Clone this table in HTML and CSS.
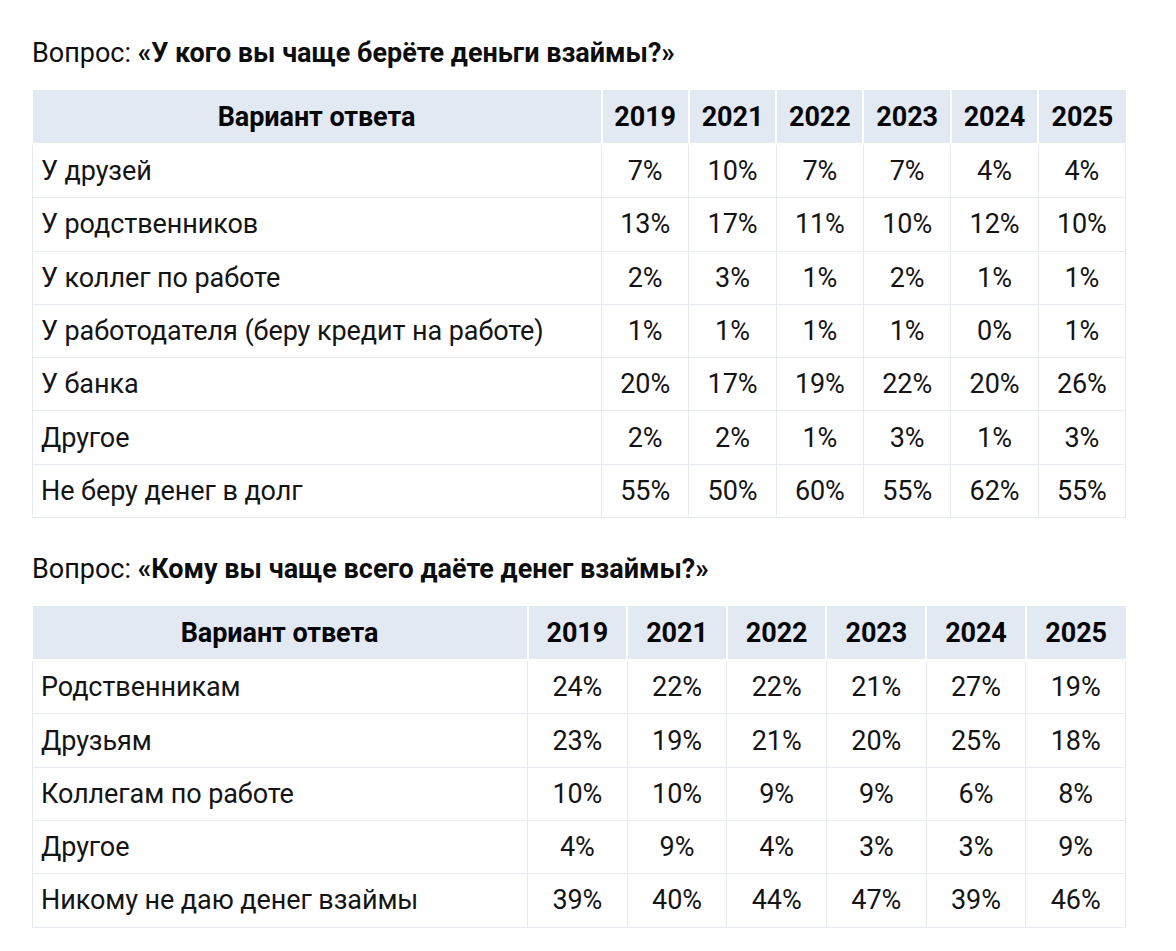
FILE: index.html
```html
<!DOCTYPE html>
<html lang="ru">
<head>
<meta charset="utf-8">
<link rel="stylesheet" href="styles.css">
</head>
<body>
<main class="page">
  <section class="block">
    <p class="question">Вопрос: <b>«У кого вы чаще берёте деньги взаймы?»</b></p>
    <table class="data t1">
      <colgroup><col class="c-first"><col><col><col><col><col><col></colgroup>
      <thead>
        <tr><th>Вариант ответа</th><th>2019</th><th>2021</th><th>2022</th><th>2023</th><th>2024</th><th>2025</th></tr>
      </thead>
      <tbody>
        <tr><td>У друзей</td><td>7%</td><td>10%</td><td>7%</td><td>7%</td><td>4%</td><td>4%</td></tr>
        <tr><td>У родственников</td><td>13%</td><td>17%</td><td>11%</td><td>10%</td><td>12%</td><td>10%</td></tr>
        <tr><td>У коллег по работе</td><td>2%</td><td>3%</td><td>1%</td><td>2%</td><td>1%</td><td>1%</td></tr>
        <tr><td>У работодателя (беру кредит на работе)</td><td>1%</td><td>1%</td><td>1%</td><td>1%</td><td>0%</td><td>1%</td></tr>
        <tr><td>У банка</td><td>20%</td><td>17%</td><td>19%</td><td>22%</td><td>20%</td><td>26%</td></tr>
        <tr><td>Другое</td><td>2%</td><td>2%</td><td>1%</td><td>3%</td><td>1%</td><td>3%</td></tr>
        <tr><td>Не беру денег в долг</td><td>55%</td><td>50%</td><td>60%</td><td>55%</td><td>62%</td><td>55%</td></tr>
      </tbody>
    </table>
  </section>
  <section class="block">
    <p class="question">Вопрос: <b>«Кому вы чаще всего даёте денег взаймы?»</b></p>
    <table class="data t2">
      <colgroup><col class="c-first"><col><col><col><col><col><col></colgroup>
      <thead>
        <tr><th>Вариант ответа</th><th>2019</th><th>2021</th><th>2022</th><th>2023</th><th>2024</th><th>2025</th></tr>
      </thead>
      <tbody>
        <tr><td>Родственникам</td><td>24%</td><td>22%</td><td>22%</td><td>21%</td><td>27%</td><td>19%</td></tr>
        <tr><td>Друзьям</td><td>23%</td><td>19%</td><td>21%</td><td>20%</td><td>25%</td><td>18%</td></tr>
        <tr><td>Коллегам по работе</td><td>10%</td><td>10%</td><td>9%</td><td>9%</td><td>6%</td><td>8%</td></tr>
        <tr><td>Другое</td><td>4%</td><td>9%</td><td>4%</td><td>3%</td><td>3%</td><td>9%</td></tr>
        <tr><td>Никому не даю денег взаймы</td><td>39%</td><td>40%</td><td>44%</td><td>47%</td><td>39%</td><td>46%</td></tr>
      </tbody>
    </table>
  </section>
</main>
</body>
</html>
```
FILE: styles.css
```css
html, body {
  margin: 0;
  padding: 0;
  background: #ffffff;
}
body {
  font-family: Roboto, "Noto Sans", "Liberation Sans", sans-serif;
  color: #0d0d0d;
}
.page {
  padding: 38px 50px 0 32px;
  width: 1094px;
}
.block {
  margin-bottom: 36px;
}
.question {
  margin: 0 0 22px 0;
  font-size: 27px;
  line-height: 30px;
  color: #0d0d0d;
}
.question b {
  font-weight: 700;
}
.data {
  width: 1094px;
  border-collapse: collapse;
  table-layout: fixed;
  font-size: 27px;
  letter-spacing: -0.08px;
}
.t1 .c-first { width: 569px; }
.t2 .c-first { width: 495px; }
.data th {
  background: #e3e9f3;
  font-weight: 700;
  height: 53px;
  padding: 0 6px;
  text-align: center;
  border: 2px solid #ffffff;
  border-top: 0;
  color: #050505;
}
.data th:first-child { border-left: 0; }
.data th:last-child { border-right: 0; }
.data td {
  height: 52.3px;
  padding: 0 10px;
  text-align: center;
  border: 1px solid #e6eaf1;
  color: #141414;
}
.data td:first-child {
  text-align: left;
  padding-left: 8px;
}
```
